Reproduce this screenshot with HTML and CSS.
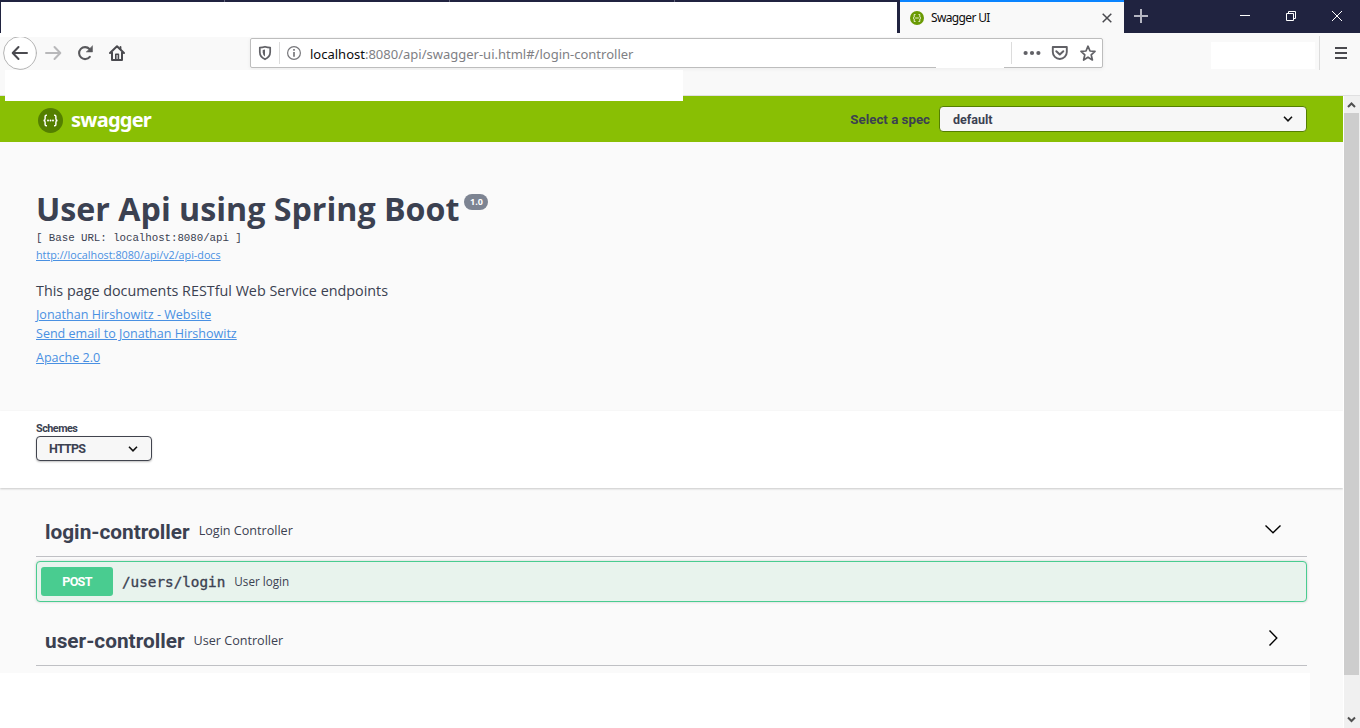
FILE: index.html
```html
<!DOCTYPE html>
<html lang="en">
<head>
<meta charset="utf-8">
<title>Swagger UI</title>
<link rel="stylesheet" href="styles.css">
</head>
<body>
<div class="window">
  <div class="tabstrip">
    <div class="blank-tabs"><i></i><i></i><i></i><i></i></div>
    <div class="tab">
      <svg class="favicon" width="14" height="14" viewBox="0 0 14 14"><circle cx="7" cy="7" r="7" fill="#6a9a04"/><path d="M5.500 3.500H4.200V6L3.200 7l1 1v2.500H5.500M8.500 3.500h1.300V6l1 1-1 1v2.500H8.500M5.200 7h3.600" fill="none" stroke="#e6f0cf" stroke-width="1"/></svg>
      <span class="tab-title">Swagger UI</span>
      <svg class="tab-close" width="10" height="10" viewBox="0 0 10 10"><path d="M.7.7l8.600 8.600M9.300.7L.7 9.300" stroke="#4a4a4f" stroke-width="1.500"/></svg>
    </div>
    <svg class="plus" width="14" height="14" viewBox="0 0 14 14"><path d="M7 0v14M0 7h14" stroke="#b5b6c2" stroke-width="2"/></svg>
    <div class="controls">
      <svg width="10" height="10" viewBox="0 0 10 10"><path d="M0 4.500h10" stroke="#fff"/></svg>
      <svg width="10" height="10" viewBox="0 0 10 10"><path d="M.5 2.500h7v7h-7zM2.500 2.500v-2h7v7h-2" fill="none" stroke="#fff"/></svg>
      <svg width="10" height="10" viewBox="0 0 10 10"><path d="M0 0l10 10M10 0L0 10" stroke="#fff"/></svg>
    </div>
  </div>
  <div class="toolbar">
    <div class="nav">
      <svg width="130" height="36" viewBox="0 0 130 36" fill="none" stroke-linecap="round" stroke-linejoin="round">
        <circle cx="20" cy="18" r="16.400" fill="#fff" stroke="#b4b4b4"/>
        <path d="M27 18H13M18.500 12L12.700 18l5.800 6" stroke="#4a4a4f" stroke-width="2"/>
        <path d="M46 18h14M54.500 12l5.800 6-5.800 6" stroke="#b8b8ba" stroke-width="2"/>
        <path d="M89.800 21.800A6 6 0 1 1 89.500 14" stroke="#58585c" stroke-width="2.100"/>
        <path d="M92.500 11v6h-6z" fill="#58585c" stroke="#58585c" stroke-width=".5"/>
        <path d="M110 18l7-6.800 7 6.800M112 17.500v7.500h10v-7.500" stroke="#4a4a4f" stroke-width="2"/>
        <path d="M120.500 12v2" stroke="#4a4a4f" stroke-width="1.800"/>
        <path d="M115.800 24.500v-5.200h2.600v5.200" stroke="#4a4a4f" stroke-width="1.600"/>
      </svg>
    </div>
    <div class="urlbar">
      <svg width="60" height="28" viewBox="0 0 60 28" fill="none">
        <path d="M8.800 8.600Q11.500 8.500 14 7.700 16.500 8.500 19.200 8.600V13q0 5-5.200 7.300Q8.800 18 8.800 13z" stroke="#616166" stroke-width="1.700" stroke-linejoin="round"/>
        <path d="M14 10.500v7q-2.300-1.500-2.300-4.200v-2.400z" fill="#616166"/>
        <path d="M28.500 3v22" stroke="#dcdcdc"/>
        <circle cx="43" cy="14" r="6.400" stroke="#77777b" stroke-width="1.200"/>
        <path d="M43 13v4.800M43 10v1.700" stroke="#66666a" stroke-width="1.500"/>
      </svg>
      <span class="url"><b>localhost</b>:8080/api/swagger-ui.html#/login-controller</span>
      <svg class="actions" width="91" height="28" viewBox="0 0 91 28" fill="none">
        <path d="M.5 3v22" stroke="#dcdcdc"/>
        <g fill="#616166"><circle cx="14.600" cy="14" r="2.100"/><circle cx="21" cy="14" r="2.100"/><circle cx="27.400" cy="14" r="2.100"/></g>
        <path d="M41.800 8h14v5a7 7 0 0 1-14 0z" stroke="#616166" stroke-width="1.900" stroke-linejoin="round"/>
        <path d="M45.300 12.200l3.500 3.300 3.500-3.300" stroke="#616166" stroke-width="2" stroke-linecap="round" stroke-linejoin="round"/>
        <path d="M77 7.200l2 4.800 5 .4-3.800 3.400 1.200 5.200-4.400-2.800-4.400 2.800 1.200-5.200-3.800-3.400 5-.4z" stroke="#616166" stroke-width="1.700" stroke-linejoin="round"/>
      </svg>
      <div class="border-gap"></div>
    </div>
    <div class="blank-tools"></div>
    <div class="menu"><svg width="12" height="12" viewBox="0 0 12 12"><path d="M0 1h12M0 6h12M0 11h12" stroke="#4a4a4f" stroke-width="2"/></svg></div>
    <div class="blank-bookmarks"></div>
  </div>
  <div class="viewport">
    <main>
      <header class="topbar">
        <svg width="25" height="25" viewBox="0 0 26 26" fill="none"><circle cx="13" cy="13" r="13" fill="#547f00"/><path d="M9.300 7.500H8.600q-1.200 0-1.200 1.300v2.400Q7.400 13 5.700 13q1.700 0 1.700 1.800v2.400q0 1.300 1.200 1.300h.7M16.700 7.500h.7q1.200 0 1.200 1.300v2.400q0 1.800 1.700 1.800-1.700 0-1.700 1.800v2.400q0 1.300-1.200 1.300h-.7" stroke="#fff" stroke-width="1.500"/><g fill="#fff"><circle cx="10.400" cy="13" r="1"/><circle cx="13" cy="13" r="1"/><circle cx="15.600" cy="13" r="1"/></g></svg>
        <span class="brand">swagger</span>
        <span class="spec-label">Select a spec</span>
        <div class="select spec"><span class="t-default">default</span><svg width="10" height="6" viewBox="0 0 10 6"><path d="M1 .8l4 4 4-4" fill="none" stroke="#111" stroke-width="1.600"/></svg></div>
      </header>
      <section class="info">
        <div class="title-row"><h1>User Api using Spring Boot</h1><span class="version">1.0</span></div>
        <div class="base">[ Base URL: localhost:8080/api ]</div>
        <a class="docs">http://localhost:8080/api/v2/api-docs</a>
        <p>This page documents RESTful Web Service endpoints</p>
        <a class="l1">Jonathan Hirshowitz - Website</a>
        <a class="l2">Send email to Jonathan Hirshowitz</a>
        <a class="l3">Apache 2.0</a>
      </section>
      <section class="schemes">
        <div class="scheme-label">Schemes</div>
        <div class="select scheme"><span class="t-https">HTTPS</span><svg width="10" height="6" viewBox="0 0 10 6"><path d="M1 .8l4 4 4-4" fill="none" stroke="#111" stroke-width="1.600"/></svg></div>
      </section>
      <section class="ops">
        <div class="tag">
          <h2>login-controller</h2><small>Login Controller</small>
          <svg width="18" height="18" viewBox="0 0 18 18"><path d="M1.500 5.500L9 12.800l7.500-7.300" fill="none" stroke="#000" stroke-width="1.400"/></svg>
        </div>
        <div class="op"><span class="method">POST</span><span class="path">/users/login</span><span class="summary">User login</span></div>
        <div class="tag second">
          <h2>user-controller</h2><small>User Controller</small>
          <svg width="18" height="18" viewBox="0 0 18 18"><path d="M5.500 1.500L12.800 9l-7.300 7.500" fill="none" stroke="#000" stroke-width="1.400"/></svg>
        </div>
      </section>
      <div class="blank-footer"></div>
    </main>
    <div class="scrollbar">
      <svg width="15" height="17" viewBox="0 0 15 17"><path d="M4 11l3.500-3.500L11 11" fill="none" stroke="#505050" stroke-width="2"/></svg>
      <div class="thumb"></div>
      <svg width="15" height="17" viewBox="0 0 15 17"><path d="M4 6.500L7.500 10 11 6.500" fill="none" stroke="#505050" stroke-width="2"/></svg>
    </div>
  </div>
</div>
</body>
</html>
```
FILE: styles.css
```css
* { box-sizing: border-box; }
body { margin: 0; font-family: "Open Sans", sans-serif; color: #3b4151; }
svg { display: block; flex: none; }
.window { width: 1360px; height: 728px; display: flex; flex-direction: column; overflow: hidden; background: #fafafa; }

.tabstrip { height: 33px; display: flex; align-items: center; background: #202340; }
.blank-tabs { width: 896px; height: 31px; margin: 2px 3px 0 1px; background: #fff; display: flex; align-self: flex-start; }
.blank-tabs i { width: 225px; height: 2px; margin-top: -2px; border-right: 1px solid #62637a; flex: none; }
.blank-tabs i:first-child { width: 224px; }
.blank-tabs i:last-child { border: 0; width: 222px; }
.tab { width: 224px; height: 33px; border-top: 2px solid #0a84ff; background: #f9f9f9; display: flex; align-items: center; padding: 0 12px 0 10px; }
.tab-title { font: 12px/16px "Noto Sans", sans-serif; color: #0c0c0d; margin-left: 7px; letter-spacing: -.65px; }
.tab-close { margin-left: auto; }
.plus { margin-left: 10px; margin-top: -1px; }
.controls { margin-left: auto; margin-right: 18px; display: flex; gap: 36px; margin-top: -1px; }

.toolbar { height: 63px; background: linear-gradient(#fff 4px, transparent 4px) 0 0 / 897px 4px no-repeat #f9f9f9; border-bottom: 1px solid #e0e0e1; display: flex; align-items: flex-start; position: relative; }
.nav { width: 250px; padding-top: 2px; }
.nav svg { clip-path: inset(2px 0 0 0); }
.urlbar { width: 853px; height: 30px; margin-top: 5px; border: 1px solid #bdbdbd; border-radius: 2px; background: #fff; box-shadow: 0 1px 4px rgba(0,0,0,.06); display: flex; align-items: center; position: relative; }
.url { font: 13px/20px "Noto Sans", sans-serif; color: #808084; white-space: nowrap; margin: 2px 0 0 -1px; }
.url b { font-weight: 400; color: #0c0c0d; }
.actions { margin-left: auto; }
.border-gap { position: absolute; left: 685px; bottom: -1px; width: 68px; height: 2px; background: #fff; }
.blank-tools { width: 104px; height: 27px; margin: 9px 4px 0 108px; background: #fff; }
.menu { height: 34px; margin-top: 3px; border-left: 1px solid #dcdcdc; padding: 11px 0 0 15px; }
.blank-bookmarks { position: absolute; left: 5px; top: 37px; width: 678px; height: 31px; background: #fff; z-index: 2; }

.viewport { flex: 1; display: flex; min-height: 0; }
main { width: 1343px; display: flex; flex-direction: column; }
.topbar { height: 46px; background: #89bf04; display: flex; align-items: center; padding: 2px 36px 0 38px; font-family: Roboto, sans-serif; font-weight: 700; color: #3b4151; }
.brand { color: #fff; font: 700 20px/24px "Noto Sans", sans-serif; margin-left: 8px; letter-spacing: -.75px; }
.spec-label { font-size: 13.3px; margin-left: auto; margin-right: 9px; margin-top: -1px; }
.select { background: #f7f7f7; border: 1px solid #41444e; border-radius: 4px; height: 26px; display: flex; align-items: center; justify-content: space-between; padding: 0 13px 0 12px; font: 700 12.5px/24px Roboto, sans-serif; box-shadow: 0 1px 2px rgba(0,0,0,.25); }
.spec { width: 368px; border-color: #547f00; box-shadow: none; margin-top: -2px; padding-left: 13px; }
.t-default { margin-top: 2px; }
.t-https { letter-spacing: -.75px; }

.info { height: 269px; padding: 44px 36px 0; display: flex; flex-direction: column; align-items: flex-start; }
.title-row { display: flex; height: 46px; }
h1 { margin: -1px 0 0; font-size: 32.2px; line-height: 48px; white-space: nowrap; }
.version { margin: 8px 0 0 5px; width: 24px; height: 16px; border-radius: 8px; background: #7d8492; color: #fff; font: 700 9px/16px "Open Sans", sans-serif; text-align: center; }
.base { font: 10.8px/12px "Liberation Mono", monospace; white-space: pre; letter-spacing: -.05px; }
.info a { color: #4990e2; text-decoration: underline; font-size: 12.55px; line-height: 19px; white-space: nowrap; }
.info .docs { font-size: 10.75px; line-height: 16px; margin-top: 3px; }
.info p { margin: 17px 0 4px; font-size: 14.35px; line-height: 21px; }
.info .l3 { margin-top: 5px; }

.schemes { height: 77px; background: #fff; box-shadow: 0 1px 2px rgba(0,0,0,.2); padding: 10px 36px 0; }
.scheme-label { font: 700 10.8px/15px Roboto, sans-serif; letter-spacing: -.5px; }
.scheme { width: 116px; height: 25px; }

.ops { height: 185px; padding: 20px 36px 0; }
.tag { height: 49px; border-bottom: 1px solid #bfc0c4; display: flex; align-items: center; padding: 0 25px 0 9px; }
h2 { margin: -1px 0 0; font: 700 20.8px/30px Roboto, sans-serif; white-space: nowrap; }
.tag small { font-size: 12.6px; line-height: 20px; margin: -2px 0 0 9px; }
.second small { margin-top: 0; }
.tag svg { margin-left: auto; margin-top: -7px; }
.op { height: 41px; margin: 4px 0 15px; border: 1px solid #49cc90; border-radius: 4px; background: #e8f3ed; box-shadow: 0 0 3px rgba(0,0,0,.19); display: flex; align-items: center; padding-left: 4px; }
.method { width: 72px; height: 29px; border-radius: 3px; background: #49cc90; color: #fff; font: 700 12.6px/29px Roboto, sans-serif; letter-spacing: -.7px; text-align: center; }
.path { font: 14.3px/20px "DejaVu Sans Mono", monospace; -webkit-text-stroke: .35px #3b4151; margin-left: 9px; }
.summary { font-size: 11.7px; margin: -1px 0 0 9px; }
.blank-footer { width: 1310px; flex: 1; background: #fff; }

.scrollbar { width: 17px; border-left: 1px solid #fff; background: #f0f0f0; display: flex; flex-direction: column; }
.thumb { height: 562px; width: 15px; background: #cdcdcd; margin-bottom: auto; }
```
